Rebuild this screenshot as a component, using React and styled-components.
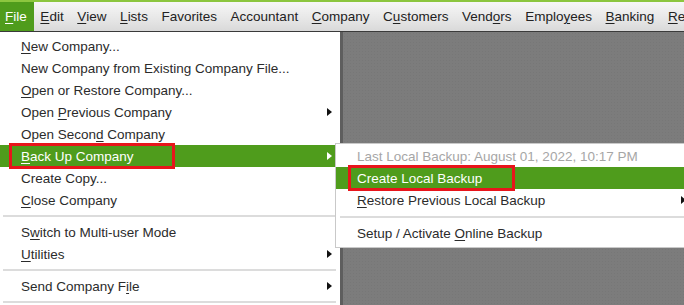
import React from 'react'
import styled, { createGlobalStyle } from 'styled-components'

const GREEN = '#4f9c1c'

const Global = createGlobalStyle`
  html, body { margin: 0; padding: 0; background: #fff; }
  body {
    width: 684px;
    height: 305px;
    overflow: hidden;
    font-family: "Liberation Sans", Arial, sans-serif;
    font-size: 13.5px;
    color: #2b2b2b;
  }
`

const Screen = styled.div`
  width: 684px;
  height: 305px;
  display: flex;
  flex-direction: column;
  overflow: hidden;
`

const MenuBar = styled.div`
  height: 29px;
  display: flex;
  align-items: stretch;
  border-top: 2px solid #8cc63f;
  border-bottom: 1px solid #3a3a3a;
  background: linear-gradient(#f7f7f7, #e6e6e6 60%, #d9d9d9);
  white-space: nowrap;
`

const BarItem = styled.div`
  display: flex;
  align-items: center;
  padding: 0 6.8px 0 ${p => (p.$first ? 5 : 6.8)}px;
  color: ${p => (p.$active ? '#fff' : '#222')};
  background: ${p => (p.$active ? GREEN : 'transparent')};
`

const U = styled.span`
  text-decoration: underline;
  text-underline-offset: 2px;
`

const Body = styled.div`
  flex: 1;
  display: flex;
  min-height: 0;
`

const FileMenu = styled.div`
  width: 340px;
  flex: none;
  background: #fff;
  padding-top: 3px;
  position: relative;
  z-index: 2;
`

const Workspace = styled.div`
  flex: 1;
  background-color: #7c7c7c;
  background-image: radial-gradient(#777 0.6px, transparent 0.8px);
  background-size: 3px 3px;
  border-left: 3px solid #5e5e5e;
`

const Row = styled.div`
  position: relative;
  height: 22px;
  display: flex;
  align-items: center;
  padding-left: ${p => p.$indent}px;
  padding-right: ${p => p.$right}px;
  color: ${p => (p.$active ? '#fff' : p.$disabled ? '#a6a6a6' : '#2b2b2b')};
  background: ${p => (p.$active ? GREEN : 'transparent')};
  white-space: nowrap;
`

const Label = styled.span`
  flex: 1;
`

const Arrow = styled.span`
  width: 0;
  height: 0;
  border-top: 4px solid transparent;
  border-bottom: 4px solid transparent;
  border-left: 5px solid ${p => (p.$light ? '#fff' : '#111')};
`

const Separator = styled.div`
  height: 2px;
  margin: ${p => (p.$sub ? '5px 0 4px 4px' : '4px 4px 4px 3px')};
  background: #dcdcdc;
`

const Highlight = styled.div`
  box-sizing: border-box;
  position: absolute;
  left: ${p => p.$left}px;
  top: -2px;
  width: ${p => p.$width}px;
  height: 26px;
  border: 3px solid #e8151b;
  pointer-events: none;
`

const SubMenu = styled.div`
  position: absolute;
  left: 335px;
  top: -2px;
  width: 360px;
  background: #fff;
  border: 1px solid #c9c9c9;
  border-right: none;
  padding: 1px 0 3px;
`

const bar = [
  [<><U>F</U>ile</>, true],
  [<><U>E</U>dit</>],
  [<><U>V</U>iew</>],
  [<><U>L</U>ists</>],
  ['Favorites'],
  ['Accountant'],
  [<><U>C</U>ompany</>],
  [<>C<U>u</U>stomers</>],
  [<>Vend<U>o</U>rs</>],
  [<>Emplo<U>y</U>ees</>],
  [<><U>B</U>anking</>],
  [<><U>R</U>eports</>],
]

function Item({ children, arrow, active, disabled, indent = 21, right = 8, extra }) {
  return (
    <Row $active={active} $disabled={disabled} $indent={indent} $right={right}>
      <Label>{children}</Label>
      {arrow && <Arrow $light={active} />}
      {extra}
    </Row>
  )
}

export default function App() {
  return (
    <Screen>
      <Global />
      <MenuBar>
        {bar.map(([label, active], i) => (
          <BarItem key={i} $active={active} $first={i === 0}>{label}</BarItem>
        ))}
      </MenuBar>
      <Body>
        <FileMenu>
          <Item><U>N</U>ew Company...</Item>
          <Item>New Company from Existing Company File...</Item>
          <Item><U>O</U>pen or Restore Company...</Item>
          <Item arrow>Open <U>P</U>revious Company</Item>
          <Item>Open Secon<U>d</U> Company</Item>
          <Item
            active
            arrow
            extra={
              <>
                <Highlight $left={9} $width={166} />
                <SubMenu>
                  <Item disabled>Last Local Backup: August 01, 2022, 10:17 PM</Item>
                  <Item active>
                    Create Local Backup
                    <Highlight $left={12} $width={167} />
                  </Item>
                  <Item arrow right={10}><U>R</U>estore Previous Local Backup</Item>
                  <Separator $sub />
                  <Item>Setup / Activate <U>O</U>nline Backup</Item>
                </SubMenu>
              </>
            }
          >
            <U>B</U>ack Up Company
          </Item>
          <Item>Create Copy...</Item>
          <Item><U>C</U>lose Company</Item>
          <Separator />
          <Item>S<U>w</U>itch to Multi-user Mode</Item>
          <Item arrow><U>U</U>tilities</Item>
          <Separator />
          <Item arrow>Send Company F<U>i</U>le</Item>
          <Separator />
        </FileMenu>
        <Workspace />
      </Body>
    </Screen>
  )
}
